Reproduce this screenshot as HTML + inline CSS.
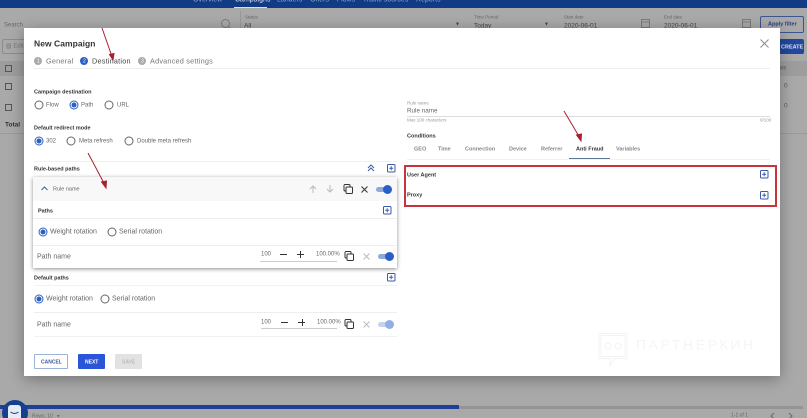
<!DOCTYPE html>
<html><head><meta charset="utf-8"><style>
html,body{margin:0;padding:0;width:807px;height:418px;overflow:hidden;background:#a9a9a9}
#w{position:absolute;left:0;top:0;width:807px;height:418px;overflow:hidden;background:#a9a9a9;font-family:"Liberation Sans","DejaVu Sans",sans-serif;color:#555;filter:blur(.3px)}
.t{position:absolute;white-space:nowrap;line-height:10px;height:10px;transform:translateY(-3.5px)}
.b{font-weight:700;color:#333}
.bar{position:absolute}
.r{position:absolute;width:7px;height:7px;border:1px solid #666;border-radius:50%;background:#fff;transform:translate(-4.5px,-4.5px)}
.r.on{border-color:#2a5fc4}
.r.on:after{content:"";position:absolute;left:1px;top:1px;width:5px;height:5px;border-radius:50%;background:#2a5fc4}
svg{position:absolute;overflow:visible}
#m{position:absolute;left:24px;top:28px;width:756px;height:348px;background:#fff;box-shadow:0 3px 14px rgba(0,0,0,.32)}
</style></head><body><div id="w">
<div class="bar" style="left:0;top:0;width:807px;height:8px;background:#123b86"></div>
<div class="t" style="left:193px;top:-1px;font-size:7px;color:#8ea5cf">Overview</div>
<div class="t" style="left:235px;top:-1px;font-size:7px;color:#d8e0f0">Campaigns</div>
<div class="bar" style="left:234px;top:7px;width:33px;height:1px;background:#d8e0f0"></div>
<div class="t" style="left:277px;top:-1px;font-size:7px;color:#8ea5cf">Landers &nbsp;&nbsp; Offers &nbsp;&nbsp; Flows &nbsp;&nbsp; Traffic sources &nbsp;&nbsp; Reports</div>
<div class="t" style="left:4px;top:24px;font-size:6px;color:#666">Search</div>
<svg style="left:220px;top:18px" width="12" height="12" fill="none" stroke="#7b7b7b"><circle cx="5.500" cy="5.500" r="4"/><path d="M8.500 8.500L11 11"/></svg>
<div class="bar" style="left:240px;top:11px;width:1px;height:17px;background:#989898"></div>
<div class="t" style="left:245px;top:16px;font-size:4.500px;color:#666">Status</div>
<div class="t" style="left:244px;top:25px;font-size:6.500px;color:#444">All</div>
<div class="t" style="left:455px;top:23px;font-size:5px;color:#444">▼</div>
<div class="t" style="left:474px;top:16px;font-size:4.500px;color:#666">Time Period</div>
<div class="t" style="left:474px;top:25px;font-size:6.500px;color:#444">Today</div>
<div class="t" style="left:544px;top:23px;font-size:5px;color:#444">▼</div>
<div class="t" style="left:564px;top:16px;font-size:4.500px;color:#666">Start date</div>
<div class="t" style="left:564px;top:25px;font-size:6.500px;color:#444">2020-06-01</div>
<svg style="left:641px;top:19px" width="9" height="9" fill="none" stroke="#7b7b7b"><rect x=".5" y=".5" width="8" height="8"/><path d="M.5 3h8"/></svg>
<div class="t" style="left:664px;top:16px;font-size:4.500px;color:#666">End date</div>
<div class="t" style="left:664px;top:25px;font-size:6.500px;color:#444">2020-06-01</div>
<svg style="left:742px;top:19px" width="9" height="9" fill="none" stroke="#7b7b7b"><rect x=".5" y=".5" width="8" height="8"/><path d="M.5 3h8"/></svg>
<div class="bar" style="left:760px;top:16px;width:42px;height:15px;border:1px solid #3d5590;border-radius:2px"></div>
<div class="t b" style="left:768px;top:23px;font-size:5.500px;color:#23407f">Apply filter</div>
<div class="bar" style="left:770px;top:39px;width:34px;height:15px;background:#21479f;border-radius:2px"></div>
<div class="t b" style="left:781px;top:45.500px;font-size:5.500px;color:#dfe6f3">CREATE</div>
<div class="bar" style="left:2px;top:39px;width:30px;height:15px;border:1px solid #8c8c8c;border-radius:2px;box-sizing:border-box"></div>
<div class="t" style="left:6px;top:45px;font-size:6px;color:#777">▨ Edit</div>
<div class="bar" style="left:0;top:61px;width:807px;height:15px;background:#9d9d9d"></div>
<div class="bar" style="left:5px;top:65px;width:5px;height:5px;border:1px solid #555"></div>
<div class="bar" style="left:5px;top:83px;width:5px;height:5px;border:1px solid #555"></div>
<div class="bar" style="left:5px;top:104px;width:5px;height:5px;border:1px solid #555"></div>
<div class="t b" style="left:5px;top:124px;font-size:6.500px;color:#333">Total</div>
<div class="t" style="left:779px;top:67px;font-size:6px;color:#555">ws</div>
<div class="t" style="left:784px;top:85px;font-size:6.500px;color:#555">0</div>
<div class="t" style="left:784px;top:105px;font-size:6.500px;color:#555">0</div>
<div class="bar" style="left:0;top:133px;width:807px;height:1px;background:#9a9a9a"></div>
<div class="bar" style="left:0;top:406px;width:803px;height:3px;background:#949494"></div>
<div class="bar" style="left:0;top:405px;width:459px;height:4px;background:#213f97"></div>
<div class="t" style="left:32px;top:415px;font-size:5px;color:#666">Rows: 10 &nbsp; ▾</div>
<div class="t" style="left:731px;top:414px;font-size:5px;color:#666">1-1 of 1</div>
<svg style="left:768px;top:412px" width="30" height="8" fill="none" stroke="#666"><path d="M6 1L3 4l3 3M21 1l3 3-3 3"/></svg>

<div id="m"></div>

<div class="bar" style="left:2px;top:400px;width:26px;height:26px;border-radius:50%;background:#14408f"></div>
<div class="bar" style="left:8px;top:405px;width:13px;height:16px;border-radius:3px;background:#e6ecf6"></div>
<svg style="left:9px;top:411px" width="12" height="5" fill="none" stroke="#14408f"><path d="M1.500 1q4 3 8 0"/></svg>

<div class="t b" style="left:34px;top:42px;font-size:8.500px;letter-spacing:.05px;color:#333">New Campaign</div>
<svg style="left:760px;top:39px" width="9" height="9" fill="none" stroke="#8c8c8c"><path d="M.5.5l8 8M8.500.5l-8 8"/></svg>

<div class="bar" style="left:34px;top:57px;width:8px;height:8px;border-radius:50%;background:#aaa"></div>
<div class="t" style="left:37px;top:60px;font-size:5px;color:#fff">1</div>
<div class="t" style="left:46px;top:60px;font-size:7.300px;letter-spacing:.2px;color:#777">General</div>
<div class="bar" style="left:80px;top:57px;width:8px;height:8px;border-radius:50%;background:#2a5fc4"></div>
<div class="t" style="left:83px;top:60px;font-size:5px;color:#fff">2</div>
<div class="t" style="left:92px;top:60px;font-size:7.300px;letter-spacing:.2px;color:#444">Destination</div>
<div class="bar" style="left:138px;top:57px;width:8px;height:8px;border-radius:50%;background:#aaa"></div>
<div class="t" style="left:141px;top:60px;font-size:5px;color:#fff">3</div>
<div class="t" style="left:150px;top:60px;font-size:7.300px;letter-spacing:.2px;color:#777">Advanced settings</div>
<div class="bar" style="left:34px;top:68px;width:736px;height:1px;background:#eee"></div>

<div class="t b" style="left:34px;top:90.500px;font-size:5.500px">Campaign destination</div>
<div class="r" style="left:38.500px;top:105px"></div><div class="t" style="left:46px;top:104px;font-size:6px;color:#666">Flow</div>
<div class="r on" style="left:74px;top:105px"></div><div class="t" style="left:81px;top:104px;font-size:6px;color:#666">Path</div>
<div class="r" style="left:109px;top:105px"></div><div class="t" style="left:117px;top:104px;font-size:6px;color:#666">URL</div>

<div class="t b" style="left:34px;top:126.500px;font-size:5.500px">Default redirect mode</div>
<div class="r on" style="left:38.500px;top:141px"></div><div class="t" style="left:46px;top:140px;font-size:6px;color:#666">302</div>
<div class="r" style="left:71px;top:141px"></div><div class="t" style="left:79px;top:140px;font-size:6px;color:#666">Meta refresh</div>
<div class="r" style="left:129px;top:141px"></div><div class="t" style="left:137px;top:140px;font-size:6px;color:#666">Double meta refresh</div>

<div class="bar" style="left:34px;top:161px;width:363px;height:1px;background:#f0f0f0"></div>
<div class="t b" style="left:34px;top:167.500px;font-size:5.500px">Rule-based paths</div>
<svg style="left:367px;top:164px" width="8" height="8" fill="none" stroke="#3b5aa8"><path d="M1 4l3-3 3 3M1 7l3-3 3 3"/></svg>
<svg style="left:387px;top:164px" width="9" height="9" fill="none" stroke="#3b5aa8"><rect x=".5" y=".5" width="7.500" height="7.500" rx="1"/><path d="M4.200 2.200v4M2.200 4.200h4"/></svg>

<div class="bar" style="left:33px;top:177px;width:364px;height:91px;background:#fff;box-shadow:0 1px 4px rgba(0,0,0,.45)"></div>
<div class="bar" style="left:33px;top:177px;width:364px;height:24px;background:#f8f8f8"></div>
<svg style="left:41px;top:186px" width="7" height="5" fill="none" stroke="#3f5f9f"><path d="M.5 4l3-3 3 3"/></svg>
<div class="t" style="left:53px;top:188px;font-size:5.500px;color:#666">Rule name</div>
<svg style="left:309px;top:185px" width="8" height="8" fill="none" stroke="#bbb"><path d="M4 8V1M1 4l3-3 3 3"/></svg>
<svg style="left:326px;top:185px" width="8" height="8" fill="none" stroke="#bbb"><path d="M4 0v7M1 4l3 3 3-3"/></svg>
<svg style="left:343px;top:184px" width="10" height="10" fill="none" stroke="#333"><rect x="3" y="3" width="6.500" height="6.500" rx="1"/><path d="M3 7H2a1 1 0 0 1-1-1V1.500a1 1 0 0 1 1-1h4a1 1 0 0 1 1 1V3"/></svg>
<svg style="left:361px;top:186px" width="7" height="7" fill="none" stroke="#333"><path d="M.5.5l6 6M6.500.5l-6 6"/></svg>
<div class="bar" style="left:376px;top:187px;width:15px;height:5px;border-radius:3px;background:#8fa9dd"></div>
<div class="bar" style="left:383px;top:185px;width:9px;height:9px;border-radius:50%;background:#2a5fc4"></div>

<div class="t b" style="left:38px;top:209.500px;font-size:5.500px">Paths</div>
<svg style="left:383px;top:206px" width="9" height="9" fill="none" stroke="#3b5aa8"><rect x=".5" y=".5" width="7.500" height="7.500" rx="1"/><path d="M4.200 2.200v4M2.200 4.200h4"/></svg>
<div class="bar" style="left:33px;top:218px;width:364px;height:1px;background:#eee"></div>
<div class="r on" style="left:42.500px;top:231.500px"></div><div class="t" style="left:50px;top:231px;font-size:7px;color:#666">Weight rotation</div>
<div class="r" style="left:111.500px;top:231.500px"></div><div class="t" style="left:119px;top:231px;font-size:7px;color:#666">Serial rotation</div>
<div class="bar" style="left:33px;top:245px;width:364px;height:1px;background:#eee"></div>
<div class="t" style="left:37px;top:255.500px;font-size:7px;color:#666">Path name</div>
<div class="t" style="left:261px;top:253px;font-size:6px;color:#666">100</div>
<div class="bar" style="left:280px;top:254px;width:7px;height:1px;background:#333"></div>
<div class="bar" style="left:297px;top:254px;width:7px;height:1px;background:#333"></div><div class="bar" style="left:300px;top:251px;width:1px;height:7px;background:#333"></div>
<div class="t" style="left:316px;top:253px;font-size:6px;color:#666">100.00%</div>
<div class="bar" style="left:260px;top:261px;width:77px;height:1px;background:#ccc"></div>
<svg style="left:344px;top:251px" width="10" height="10" fill="none" stroke="#333"><rect x="3" y="3" width="6.500" height="6.500" rx="1"/><path d="M3 7H2a1 1 0 0 1-1-1V1.500a1 1 0 0 1 1-1h4a1 1 0 0 1 1 1V3"/></svg>
<svg style="left:362.500px;top:252.500px" width="7" height="7" fill="none" stroke="#bbb"><path d="M.5.5l6 6M6.500.5l-6 6"/></svg>
<div class="bar" style="left:378px;top:254px;width:15px;height:5px;border-radius:3px;background:#8fa9dd"></div>
<div class="bar" style="left:385px;top:252px;width:9px;height:9px;border-radius:50%;background:#2a5fc4"></div>

<div class="t b" style="left:34px;top:276.500px;font-size:5.500px">Default paths</div>
<svg style="left:387px;top:273px" width="9" height="9" fill="none" stroke="#3b5aa8"><rect x=".5" y=".5" width="7.500" height="7.500" rx="1"/><path d="M4.200 2.200v4M2.200 4.200h4"/></svg>
<div class="bar" style="left:34px;top:285px;width:363px;height:1px;background:#f2f2f2"></div>
<div class="r on" style="left:38.500px;top:298.500px"></div><div class="t" style="left:46px;top:298px;font-size:7px;color:#666">Weight rotation</div>
<div class="r" style="left:104.500px;top:298.500px"></div><div class="t" style="left:112px;top:298px;font-size:7px;color:#666">Serial rotation</div>
<div class="bar" style="left:34px;top:312px;width:363px;height:1px;background:#eee"></div>
<div class="t" style="left:37px;top:323.500px;font-size:7px;color:#666">Path name</div>
<div class="t" style="left:261px;top:321px;font-size:6px;color:#666">100</div>
<div class="bar" style="left:281px;top:322px;width:7px;height:1px;background:#333"></div>
<div class="bar" style="left:298px;top:322px;width:7px;height:1px;background:#333"></div><div class="bar" style="left:301.500px;top:319px;width:1px;height:7px;background:#333"></div>
<div class="t" style="left:317px;top:321px;font-size:6px;color:#666">100.00%</div>
<div class="bar" style="left:261px;top:328px;width:76px;height:1px;background:#ccc"></div>
<svg style="left:344px;top:319px" width="10" height="10" fill="none" stroke="#333"><rect x="3" y="3" width="6.500" height="6.500" rx="1"/><path d="M3 7H2a1 1 0 0 1-1-1V1.500a1 1 0 0 1 1-1h4a1 1 0 0 1 1 1V3"/></svg>
<svg style="left:362.500px;top:320.500px" width="7" height="7" fill="none" stroke="#bbb"><path d="M.5.5l6 6M6.500.5l-6 6"/></svg>
<div class="bar" style="left:378px;top:322px;width:15px;height:5px;border-radius:3px;background:#c5d3ee"></div>
<div class="bar" style="left:385px;top:320px;width:9px;height:9px;border-radius:50%;background:#93aee3"></div>
<div class="bar" style="left:34px;top:336px;width:363px;height:1px;background:#f2f2f2"></div>

<div class="bar" style="left:34px;top:354px;width:34px;height:15px;box-sizing:border-box;border:1px solid #9db2d8;border-radius:1px"></div>
<div class="t b" style="left:41px;top:360.500px;font-size:5px;color:#3e5a94">CANCEL</div>
<div class="bar" style="left:78px;top:354px;width:27px;height:15px;background:#2a55d8;border-radius:1px"></div>
<div class="t b" style="left:85px;top:360.500px;font-size:5px;color:#fff">NEXT</div>
<div class="bar" style="left:115px;top:354px;width:27px;height:15px;background:#e2e2e2;border-radius:1px"></div>
<div class="t b" style="left:122px;top:360.500px;font-size:5px;color:#bbb">SAVE</div>

<div class="t" style="left:407px;top:102px;font-size:4.500px;color:#999">Rule name</div>
<div class="t" style="left:407px;top:110px;font-size:6.300px;color:#666">Rule name</div>
<div class="bar" style="left:407px;top:115.500px;width:363px;height:1.500px;background:#ddd"></div>
<div class="t" style="left:407px;top:119px;font-size:4.500px;color:#999">Max 100 characters</div>
<div class="t" style="left:760px;top:119px;font-size:4.500px;color:#999">0/100</div>
<div class="t b" style="left:407px;top:135px;font-size:5.500px">Conditions</div>
<div class="t" style="left:414px;top:147.500px;font-size:5.500px;color:#888;font-weight:700">GEO</div>
<div class="t" style="left:438px;top:147.500px;font-size:5.500px;color:#888;font-weight:700">Time</div>
<div class="t" style="left:465px;top:147.500px;font-size:5.500px;color:#888;font-weight:700">Connection</div>
<div class="t" style="left:509px;top:147.500px;font-size:5.500px;color:#888;font-weight:700">Device</div>
<div class="t" style="left:541px;top:147.500px;font-size:5.500px;color:#888;font-weight:700">Referrer</div>
<div class="t b" style="left:576px;top:147.500px;font-size:5.500px">Anti Fraud</div>
<div class="t" style="left:616px;top:147.500px;font-size:5.500px;color:#888;font-weight:700">Variables</div>
<div class="bar" style="left:569px;top:158px;width:41px;height:1px;background:#5a7a9a"></div>
<div class="bar" style="left:407px;top:159px;width:363px;height:1px;background:#f2f2f2"></div>

<div class="bar" style="left:404px;top:165px;width:373px;height:42px;box-sizing:border-box;border:2px solid #c8343c"></div>
<div class="t b" style="left:407px;top:173.500px;font-size:5.500px">User Agent</div>
<div class="t b" style="left:407px;top:194px;font-size:5.500px">Proxy</div>
<svg style="left:760px;top:170px" width="9" height="9" fill="none" stroke="#3b5aa8"><rect x=".5" y=".5" width="7.500" height="7.500" rx="1"/><path d="M4.200 2.200v4M2.200 4.200h4"/></svg>
<svg style="left:760px;top:190.500px" width="9" height="9" fill="none" stroke="#3b5aa8"><rect x=".5" y=".5" width="7.500" height="7.500" rx="1"/><path d="M4.200 2.200v4M2.200 4.200h4"/></svg>

<svg style="left:0;top:0" width="807" height="418" fill="none" stroke="#a8202c" stroke-width="1">
<path d="M102 28L112.500 58"/><path d="M109.500 54.500L113 60l1-6.500z" fill="#a8202c"/>
<path d="M88 153L105 185"/><path d="M101.500 182L106 188l.5-7z" fill="#a8202c"/>
<path d="M564 111L580 138"/><path d="M576.500 135L581 141l.5-7z" fill="#a8202c"/>
</svg>

<svg style="left:597px;top:332px" width="34" height="37" fill="none" stroke="#f3f3f3"><path d="M2 1.500h28v25H17l-4 8v-8H2z"/><path d="M4 3.500h24v21H4z"/><circle cx="11" cy="14" r="3"/><circle cx="21" cy="14" r="3"/></svg>
<div class="t" style="left:636px;top:343px;font-size:14px;letter-spacing:2.600px;color:#f5f5f5">ПАРТНЕРКИН</div>
</div></body></html>
